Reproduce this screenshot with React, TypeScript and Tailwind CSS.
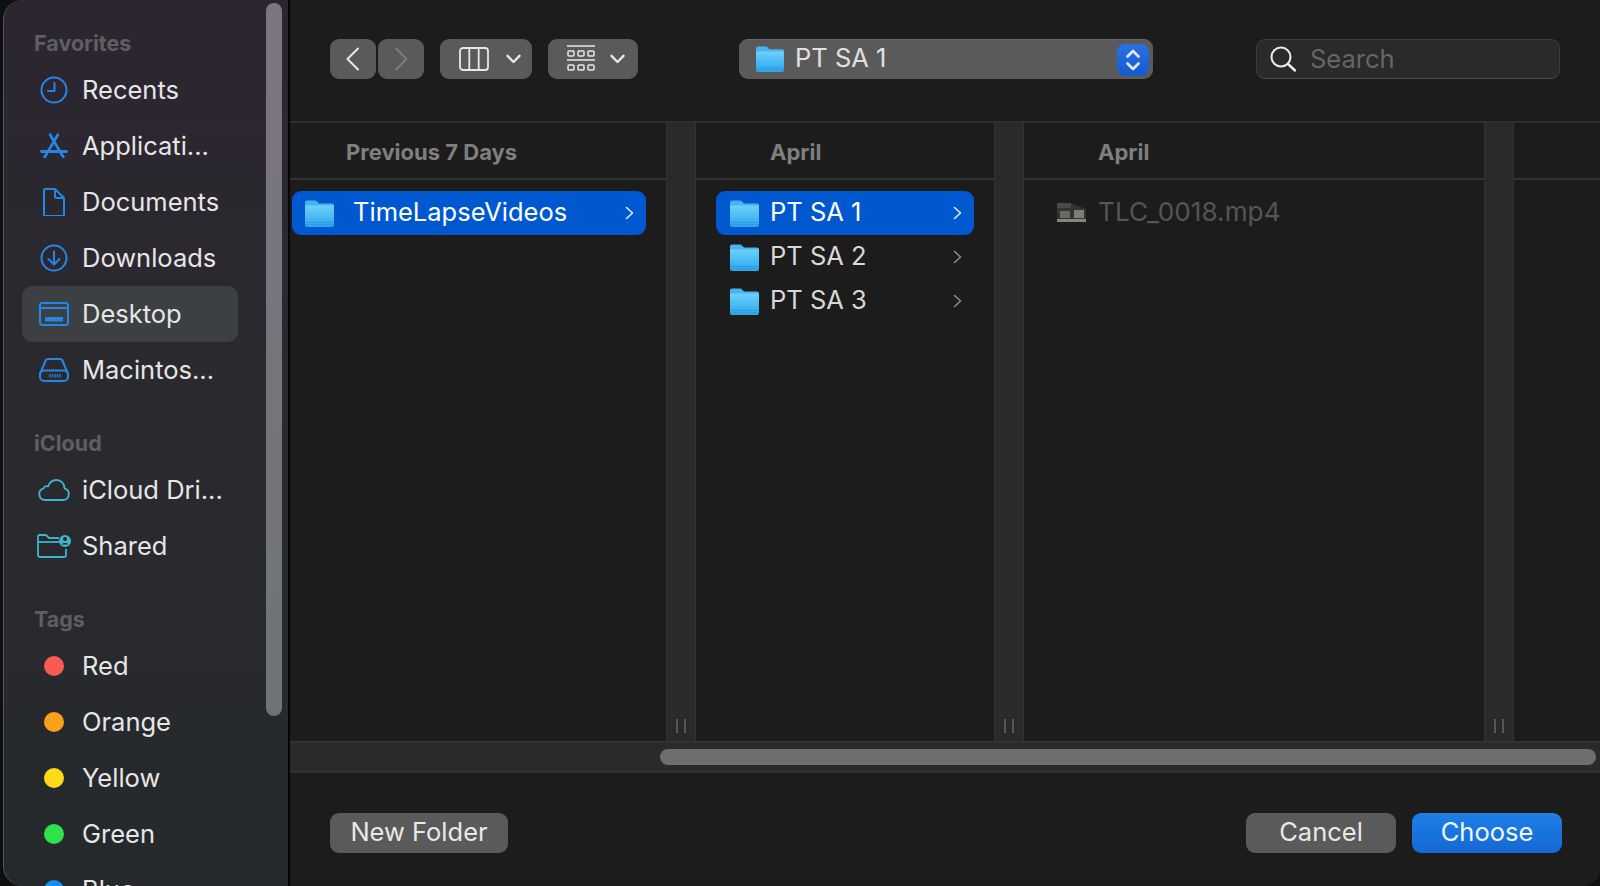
import React from "react";

const blue = "#2586e6";
const teal = "#3fb4d0";

function Svg({ children, w = 28, h = 28, vb }: { children: React.ReactNode; w?: number; h?: number; vb?: string }) {
  return (
    <svg width={w} height={h} viewBox={vb ?? `0 0 ${w} ${h}`} fill="none" stroke={blue} strokeWidth={2} strokeLinecap="round" strokeLinejoin="round">
      {children}
    </svg>
  );
}

const icons: Record<string, React.ReactNode> = {
  recents: (
    <Svg>
      <circle cx="14" cy="14" r="12.500" />
      <path d="M14.500 7v8H8" />
    </Svg>
  ),
  apps: (
    <Svg>
      <path d="M10 2.500L22 23M18 2.500L6 23" strokeWidth={2.600} />
      <path d="M1.500 19.500h25" strokeWidth={2.800} />
      <path d="M4.500 25l1.500-2M23.500 25L22 23" strokeWidth={2.600} />
    </Svg>
  ),
  docs: (
    <svg width="22" height="28" viewBox="0 0 22 28" fill="none" stroke={blue} strokeWidth={2} strokeLinejoin="round">
      <path d="M1 2.500A1.500 1.500 0 0 1 2.500 1H12l9 9v16.500a1.500 1.500 0 0 1-1.500 1.500h-17A1.500 1.500 0 0 1 1 26.500z" />
      <path d="M12 1v7.500a1.500 1.500 0 0 0 1.500 1.500H21" />
    </svg>
  ),
  downloads: (
    <Svg>
      <circle cx="14" cy="14" r="12.500" />
      <path d="M14 7.500v13M8.500 15l5.500 5.500 5.500-5.500" />
    </Svg>
  ),
  desktop: (
    <Svg w={30} h={24}>
      <rect x="1" y="1" width="28" height="22" rx="2.500" />
      <path d="M1 6h28" />
      <rect x="6" y="15" width="18" height="4.500" rx="0.500" fill={blue} stroke="none" />
    </Svg>
  ),
  mac: (
    <Svg w={30} h={24}>
      <path d="M1 16L6 4a3.500 3.500 0 0 1 3-3h12a3.500 3.500 0 0 1 3 3l5 12" />
      <rect x="1" y="12.500" width="28" height="10.500" rx="4" />
      <path d="M11 16v3.500M13.500 16v3.500M16 16v3.500M18.500 16v3.500M21 16v3.500" strokeWidth={1.300} strokeLinecap="butt" />
    </Svg>
  ),
  cloud: (
    <svg width="32" height="22" viewBox="0 0 32 22" fill="none" stroke={teal} strokeWidth={1.800} strokeLinejoin="round">
      <path d="M7 21a6 6 0 0 1-1.500-11.700C6.500 7 8.500 7 10 7.500 11.500 3.500 15 1 18.500 1c4.500 0 8 3.500 8 8.300A6 6 0 0 1 25.500 21z" />
    </svg>
  ),
  shared: (
    <svg width="34" height="24" viewBox="0 0 34 24" fill="none" stroke={teal} strokeWidth={1.800} strokeLinejoin="round">
      <path d="M29 15v6a2 2 0 0 1-2 2H3a2 2 0 0 1-2-2V2.500A1.500 1.500 0 0 1 2.500 1h6.500l3 3h10" />
      <path d="M1 8h21" />
      <circle cx="28" cy="7" r="6" fill={teal} stroke="none" />
      <circle cx="28" cy="5" r="2" fill="#25292b" stroke="none" />
      <path d="M24.500 10.500c1-2 6-2 7 0z" fill="#25292b" stroke="none" />
    </svg>
  ),
};

function SideRow({ label, icon, color, active }: { label: string; icon?: string; color?: string; active?: boolean }) {
  return (
    <div className={`flex h-[56px] items-center rounded-[10px] pl-[9px] ${active ? "bg-[#3d4043]" : ""}`}>
      <div className="flex w-[46px] shrink-0 items-center justify-center">
        {icon ? icons[icon] : <div className="h-[20px] w-[20px] rounded-full" style={{ background: color }} />}
      </div>
      <span className="ml-[5px] text-[25.500px] leading-none text-[#e6e6e6]">{label}</span>
    </div>
  );
}

function SideHead({ label, cls }: { label: string; cls: string }) {
  return <div className={`flex h-[38px] items-center pl-[12px] pt-[2px] text-[21.500px] font-bold leading-none text-[#5e5f62] ${cls}`}>{label}</div>;
}

function Sidebar() {
  return (
    <aside className="relative h-full w-[285px] shrink-0 overflow-hidden rounded-l-[20px] border-l border-[#55565a] bg-gradient-to-b from-[#2c2530] via-[#2a2a2e] to-[#25292b]">
      <div className="pl-[18px] pr-[50px] pt-[24px]">
        <SideHead label="Favorites" cls="" />
        <SideRow label="Recents" icon="recents" />
        <SideRow label="Applicati..." icon="apps" />
        <SideRow label="Documents" icon="docs" />
        <SideRow label="Downloads" icon="downloads" />
        <SideRow label="Desktop" icon="desktop" active />
        <SideRow label="Macintos..." icon="mac" />
        <SideHead label="iCloud" cls="mt-[26px]" />
        <SideRow label="iCloud Dri..." icon="cloud" />
        <SideRow label="Shared" icon="shared" />
        <SideHead label="Tags" cls="mt-[26px]" />
        <SideRow label="Red" color="#fb5a54" />
        <SideRow label="Orange" color="#f9a11b" />
        <SideRow label="Yellow" color="#fedb18" />
        <SideRow label="Green" color="#2de24c" />
        <SideRow label="Blue" color="#1a8cf5" />
      </div>
      <div className="absolute left-[262px] top-[3px] h-[713px] w-[16px] rounded-full bg-gradient-to-b from-[#7d7581] to-[#6e7476]" />
    </aside>
  );
}

function Folder({ id, w = 29, h = 27 }: { id: string; w?: number; h?: number }) {
  return (
    <svg width={w} height={h} viewBox="0 0 29 27" className="shrink-0">
      <defs>
        <linearGradient id={id} x1="0" y1="0" x2="0" y2="1">
          <stop offset="0" stopColor="#6fd0fb" />
          <stop offset="1" stopColor="#2ba6ec" />
        </linearGradient>
      </defs>
      <path d="M0 2.500A2 2 0 0 1 2 .5h8c1 0 1.500 .5 2.500 1.500l1.500 1.500h13a2 2 0 0 1 2 2V6H0z" fill="#45b5f2" />
      <path d="M0 5.500h29V25a2 2 0 0 1-2 2H2a2 2 0 0 1-2-2z" fill={`url(#${id})`} />
      <path d="M0 22.500h29M0 24.800h29" stroke="#1f8fd8" strokeWidth="0.700" opacity="0.700" />
    </svg>
  );
}

function Chevron({ color }: { color: string }) {
  return (
    <svg width="9" height="14" viewBox="0 0 9 14" fill="none" stroke={color} strokeWidth="1.600" strokeLinecap="round" strokeLinejoin="round" className="shrink-0">
      <path d="M1.500 1.500L7.500 7l-6 5.500" />
    </svg>
  );
}

function FolderRow({ id, label, selected, cls, gap, chev }: { id: string; label: string; selected?: boolean; cls: string; gap: string; chev: string }) {
  return (
    <div className={`flex h-[44px] items-center rounded-[9px] ${cls} ${selected ? "bg-[#0058d0]" : ""}`}>
      <Folder id={id} />
      <span className={`${gap} pb-[2px] text-[25.500px] leading-none ${selected ? "text-white" : "text-[#d8d8d8]"}`}>{label}</span>
      <span className={`ml-auto ${chev}`}>
        <Chevron color={selected ? "#e6eefc" : "#8a8a8a"} />
      </span>
    </div>
  );
}

function ColHead({ label, cls }: { label: string; cls: string }) {
  return (
    <div className={`flex h-[57px] items-center border-b-2 border-[#323232] pt-[2px] text-[22px] font-bold leading-none text-[#7f7f7f] ${cls}`}>
      {label}
    </div>
  );
}

function Resizer() {
  return (
    <div className="flex w-[30px] shrink-0 items-end justify-center gap-[6px] border-x border-[#333333] bg-[#2a2a2a] pb-[8px]">
      <div className="h-[14px] w-[2px] bg-[#565656]" />
      <div className="h-[14px] w-[2px] bg-[#565656]" />
    </div>
  );
}

function ToolButton({ children, cls }: { children: React.ReactNode; cls: string }) {
  return <div className={`flex h-[40px] items-center rounded-[9px] bg-[#5a5a5a] ${cls}`}>{children}</div>;
}

function SmallChevron() {
  return (
    <svg width="15" height="10" viewBox="0 0 15 10" fill="none" stroke="#e8e8e8" strokeWidth="2.400" strokeLinecap="round" strokeLinejoin="round">
      <path d="M1.500 1.800L7.500 8l6-6.200" />
    </svg>
  );
}

function Toolbar() {
  return (
    <div className="flex h-[123px] shrink-0 items-start border-b-2 border-[#2e2e2e] pl-[40px] pt-[39px]">
      <ToolButton cls="w-[46px] justify-center">
        <svg width="14" height="24" viewBox="0 0 14 24" fill="none" stroke="#e8e8e8" strokeWidth="2" strokeLinecap="round" strokeLinejoin="round">
          <path d="M12 1.500L1.500 12 12 22.500" />
        </svg>
      </ToolButton>
      <ToolButton cls="ml-[2px] w-[46px] justify-center">
        <svg width="14" height="24" viewBox="0 0 14 24" fill="none" stroke="#7c7c7c" strokeWidth="2" strokeLinecap="round" strokeLinejoin="round">
          <path d="M2 1.500L12.500 12 2 22.500" />
        </svg>
      </ToolButton>
      <ToolButton cls="ml-[16px] w-[92px] pl-[19px]">
        <svg width="30" height="24" viewBox="0 0 30 24" fill="none" stroke="#e8e8e8" strokeWidth="1.800">
          <rect x="1" y="1" width="28" height="22" rx="3" />
          <path d="M10.300 1v22M19.700 1v22" />
        </svg>
        <span className="ml-[17px] flex">
          <SmallChevron />
        </span>
      </ToolButton>
      <ToolButton cls="ml-[16px] w-[90px] pl-[19px]">
        <svg width="28" height="28" viewBox="0 0 28 28" fill="none" stroke="#e8e8e8" strokeWidth="1.500">
          <path d="M0 1h28M0 15h28" />
          <rect x="1" y="6" width="6" height="5" rx="1" />
          <rect x="11" y="6" width="6" height="5" rx="1" />
          <rect x="21" y="6" width="6" height="5" rx="1" />
          <rect x="1" y="20" width="6" height="5" rx="1" />
          <rect x="11" y="20" width="6" height="5" rx="1" />
          <rect x="21" y="20" width="6" height="5" rx="1" />
        </svg>
        <span className="ml-[15px] flex">
          <SmallChevron />
        </span>
      </ToolButton>
      <div className="ml-[101px] flex h-[40px] w-[414px] items-center rounded-[9px] border-t border-[#6a6a6a] bg-[#5a5a5a] pl-[17px] pr-[4px]">
        <span className="mb-[2px] flex">
          <Folder id="fp" w={28} h={26} />
        </span>
        <span className="mb-[4px] ml-[11px] text-[25.500px] leading-none text-[#e0e0e0]">PT SA 1</span>
        <div className="ml-auto flex h-[32px] w-[32px] items-center justify-center rounded-[8px] bg-gradient-to-b from-[#2a72e4] to-[#1559cf]">
          <svg width="16" height="26" viewBox="0 0 16 26" fill="none" stroke="#dfeafe" strokeWidth="2.600" strokeLinecap="round" strokeLinejoin="round">
            <path d="M2.500 9.500L8 4l5.500 5.500M2.500 16.500L8 22l5.500-5.500" />
          </svg>
        </div>
      </div>
      <div className="ml-[103px] flex h-[40px] w-[304px] items-center rounded-[9px] border border-[#3c3c3c] border-b-[#4a4a4a] bg-[#2a2a2a] pl-[13px]">
        <svg width="26" height="26" viewBox="0 0 26 26" fill="none" stroke="#ececec" strokeWidth="2" strokeLinecap="round">
          <circle cx="11" cy="11" r="9.500" />
          <path d="M18 18l7 6.500" strokeWidth="2.400" />
        </svg>
        <span className="ml-[14px] text-[25.500px] leading-none text-[#666666]">Search</span>
      </div>
    </div>
  );
}

function Columns() {
  return (
    <div className="flex min-h-0 flex-1">
      <div className="w-[376px] shrink-0">
        <ColHead label="Previous 7 Days" cls="pl-[56px]" />
        <div className="pl-[2px] pr-[20px] pt-[11px]">
          <FolderRow id="f1" label="TimeLapseVideos" selected cls="pl-[13px]" gap="ml-[19px]" chev="mr-[12px]" />
        </div>
      </div>
      <Resizer />
      <div className="w-[298px] shrink-0">
        <ColHead label="April" cls="pl-[74px]" />
        <div className="pl-[20px] pr-[20px] pt-[11px]">
          <FolderRow id="f2" label="PT SA 1" selected cls="pl-[14px]" gap="ml-[11px]" chev="mr-[12px]" />
          <FolderRow id="f3" label="PT SA 2" cls="pl-[14px]" gap="ml-[11px]" chev="mr-[12px]" />
          <FolderRow id="f4" label="PT SA 3" cls="pl-[14px]" gap="ml-[11px]" chev="mr-[12px]" />
        </div>
      </div>
      <Resizer />
      <div className="w-[460px] shrink-0">
        <ColHead label="April" cls="pl-[74px]" />
        <div className="mt-[10px] flex h-[44px] items-center pl-[33px]">
          <svg width="29" height="20" viewBox="0 0 29 20" className="shrink-0">
            <rect x="0" y="1" width="29" height="19" fill="#333333" />
            <path d="M14 1h15v6z" fill="#1c1c1c" />
            <rect x="0" y="1" width="14" height="5" fill="#4a4a4a" />
            <rect x="3" y="9" width="10" height="7" fill="#6a6a64" />
            <rect x="17" y="8" width="10" height="8" fill="#7e7e78" />
            <rect x="0" y="17" width="29" height="3" fill="#85857c" />
          </svg>
          <span className="ml-[12px] text-[26.200px] leading-none text-[#555555]">TLC_0018.mp4</span>
        </div>
      </div>
      <Resizer />
      <div className="flex-1">
        <div className="h-[57px] border-b-2 border-[#323232]" />
      </div>
    </div>
  );
}

function ActionButton({ label, cls }: { label: string; cls: string }) {
  return <div className={`flex h-[40px] items-center justify-center rounded-[9px] pb-[2px] text-[25.500px] leading-none text-[#e8e8e8] ${cls}`}>{label}</div>;
}

function Footer() {
  return (
    <>
      <div className="flex h-[32px] shrink-0 items-center border-t-2 border-b-[3px] border-t-[#333333] border-b-[#303030] bg-[#2a2a2a] pl-[370px] pr-[4px]">
        <div className="h-[16px] flex-1 rounded-full bg-[#6e6e6e]" />
      </div>
      <div className="flex h-[113px] shrink-0 items-start pl-[40px] pr-[38px] pt-[40px]">
        <ActionButton label="New Folder" cls="w-[178px] bg-[#5a5a5a]" />
        <ActionButton label="Cancel" cls="ml-auto w-[150px] bg-[#5a5a5a]" />
        <ActionButton label="Choose" cls="ml-[16px] w-[150px] bg-gradient-to-b from-[#1e7fe6] to-[#1568d2] text-[#f0f6ff]" />
      </div>
    </>
  );
}

export default function App() {
  return (
    <div className="flex h-[886px] w-[1600px] overflow-hidden bg-[#0e0f11] pl-[3px] font-['Inter',sans-serif]">
      <Sidebar />
      <div className="w-[2px] shrink-0 bg-[#050505]" />
      <main className="flex h-full min-w-0 flex-1 flex-col overflow-hidden rounded-br-[16px] bg-[#1c1c1c]">
        <Toolbar />
        <Columns />
        <Footer />
      </main>
    </div>
  );
}
